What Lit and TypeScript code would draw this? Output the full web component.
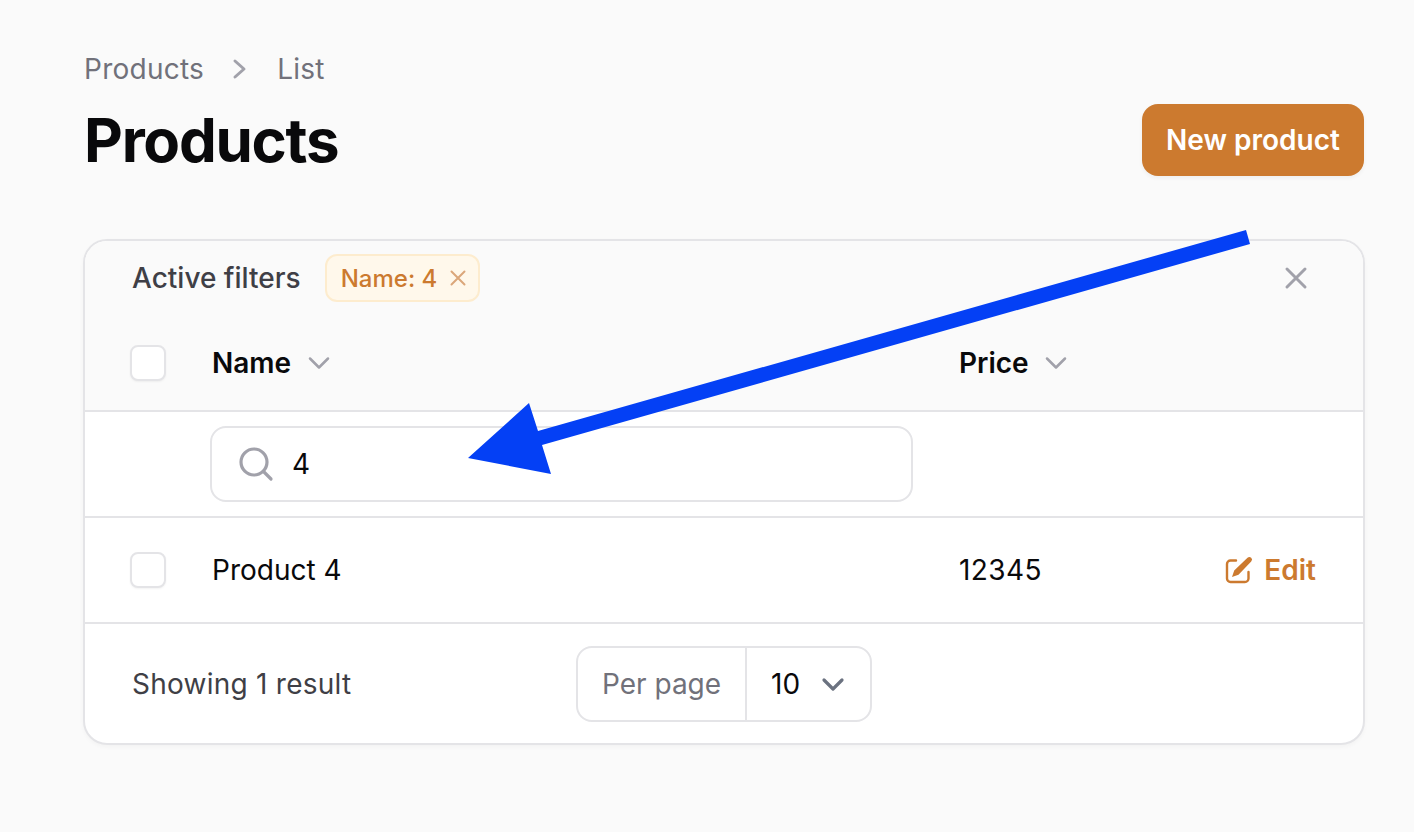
import { LitElement, html, css } from "lit";
import { customElement } from "lit/decorators.js";

const chevron = html`<svg class="chev" viewBox="0 0 24 24" fill="none" stroke="currentColor" stroke-width="2.5" stroke-linecap="round" stroke-linejoin="round"><path d="M3 7.5 12 16.5 21 7.5"/></svg>`;

@customElement("app-root")
export class AppRoot extends LitElement {
  static styles = css`
    :host { display: block; position: relative; width: 1414px; height: 832px; overflow: hidden; background: #fafafa; font-family: Inter, "Liberation Sans", sans-serif; color: #09090b; font-size: 28px; }
    * { box-sizing: border-box; }
    .page { padding: 48px 50px 0 84px; }
    .crumbs { display: flex; align-items: center; height: 41px; color: #71717a; font-weight: 400; letter-spacing: .25px; }
    .crumb-sep { width: 20px; height: 28px; margin: 0 26px 0 27px; color: #a1a1aa; }
    .head { display: flex; justify-content: space-between; align-items: center; height: 72px; margin-top: 15px; margin-bottom: 63px; }
    h1 { margin: 0; font-size: 60px; line-height: 72px; font-weight: 700; letter-spacing: -1.25px; color: #09090b; }
    .btn { display: flex; align-items: center; justify-content: center; width: 222px; height: 72px; border-radius: 16px; background: #cc7a2f; color: #fff; font-weight: 600; box-shadow: 0 2px 4px rgba(0,0,0,.05); }
    .card { width: 1282px; height: 506px; margin-left: -1px; background: #fff; border: 2px solid #e4e4e7; border-radius: 24px; overflow: hidden; box-shadow: 0 2px 4px rgba(0,0,0,.03); }
    .top { background: #fafafa; border-bottom: 2px solid #e4e4e7; height: 171px; }
    .filters { display: flex; align-items: center; height: 74px; padding: 0 47px; }
    .filters .label { color: #3f3f46; font-weight: 500; }
    .chip { display: flex; align-items: center; gap: 11px; height: 48px; margin-left: 24px; padding: 0 10px 0 14px; background: #fff8eb; border: 2px solid #fdecce; border-radius: 12px; color: #cc7a2f; font-size: 24px; font-weight: 500; }
    .chip svg { width: 20px; height: 20px; color: #dba77a; }
    .clear { width: 28px; height: 28px; margin-left: auto; margin-right: 6px; color: #a1a1aa; }
    .hrow { display: flex; align-items: center; height: 95px; }
    .box { width: 36px; height: 36px; flex: none; margin-left: 45px; background: #fff; border: 2px solid #e4e4e7; border-radius: 8px; box-shadow: 0 1px 2px rgba(0,0,0,.05); }
    .col-name { width: 747px; margin-left: 46px; display: flex; align-items: center; }
    .col-price { display: flex; align-items: center; }
    .row .col-price { letter-spacing: .4px; }
    .th { font-weight: 600; }
    .chev { width: 24px; height: 24px; margin-left: 16px; color: #a1a1aa; }
    .col-price .chev { margin-left: 15px; }
    .frow { display: flex; align-items: center; height: 106px; border-bottom: 2px solid #e4e4e7; padding-left: 125px; }
    .search { display: flex; align-items: center; width: 703px; height: 76px; background: #fff; border: 2px solid #e4e4e7; border-radius: 16px; padding-left: 26px; }
    .search svg { width: 36px; height: 36px; color: #a1a1aa; flex: none; }
    .search span { margin-left: 18px; }
    .row { display: flex; align-items: center; height: 106px; border-bottom: 2px solid #e4e4e7; }
    .edit { display: flex; align-items: center; gap: 10px; margin-left: auto; margin-right: 47px; color: #cc7a2f; font-weight: 600; font-size: 28px; }
    .edit svg { width: 30px; height: 30px; }
    .foot { display: flex; align-items: center; height: 119px; padding: 1px 0 0 47px; }
    .foot .txt { color: #3f3f46; width: 444px; font-weight: 400; letter-spacing: .25px; }
    .per { display: flex; align-items: center; width: 296px; height: 76px; background: #fff; border: 2px solid #e4e4e7; border-radius: 16px; }
    .per .l { width: 169px; height: 100%; display: flex; align-items: center; padding-left: 24px; color: #71717a; border-right: 2px solid #e4e4e7; }
    .per .v { margin-left: 24px; }
    .per svg { width: 24px; height: 24px; margin-left: 21px; color: #6b7280; }
    .arrow { position: absolute; left: 0; top: 0; width: 1414px; height: 832px; pointer-events: none; }
  `;

  render() {
    return html`
      <div class="page">
        <nav class="crumbs">
          <span>Products</span>
          <svg class="crumb-sep" viewBox="0 0 20 28" fill="none" stroke="currentColor" stroke-width="3" stroke-linecap="round" stroke-linejoin="round"><path d="M4 6 13 14 4 22"/></svg>
          <span>List</span>
        </nav>
        <div class="head">
          <h1>Products</h1>
          <div class="btn">New product</div>
        </div>
        <section class="card">
          <div class="top">
            <div class="filters">
              <span class="label">Active filters</span>
              <div class="chip">
                <span>Name: 4</span>
                <svg viewBox="0 0 20 20" fill="none" stroke="currentColor" stroke-width="2" stroke-linecap="round"><path d="M3.5 3.5 16.5 16.5M16.5 3.5 3.5 16.5"/></svg>
              </div>
              <svg class="clear" viewBox="0 0 28 28" fill="none" stroke="currentColor" stroke-width="3" stroke-linecap="round"><path d="M5 5 23 23M23 5 5 23"/></svg>
            </div>
            <div class="hrow">
              <div class="box"></div>
              <div class="col-name th">Name ${chevron}</div>
              <div class="col-price th">Price ${chevron}</div>
            </div>
          </div>
          <div class="frow">
            <div class="search">
              <svg viewBox="0 0 36 36" fill="none" stroke="currentColor" stroke-width="3.2" stroke-linecap="round"><circle cx="16" cy="16" r="13"/><path d="M25.5 25.5 33 33"/></svg>
              <span>4</span>
            </div>
          </div>
          <div class="row">
            <div class="box"></div>
            <div class="col-name">Product 4</div>
            <div class="col-price">12345</div>
            <div class="edit">
              <svg viewBox="0 0 30 30" fill="none"><path d="M12 5.5H6.5a3.5 3.5 0 0 0-3.5 3.5v14.5a3.5 3.5 0 0 0 3.5 3.5H21a3.5 3.5 0 0 0 3.5-3.5V17" stroke="currentColor" stroke-width="2.4" stroke-linecap="round"/><path d="M23.5 2.8a2.6 2.6 0 0 1 3.7 3.7L14.5 19.8 8 22l2.2-6.5z" fill="currentColor"/></svg>
              <span>Edit</span>
            </div>
          </div>
          <div class="foot">
            <span class="txt">Showing 1 result</span>
            <div class="per">
              <div class="l">Per page</div>
              <span class="v">10</span>
              <svg viewBox="0 0 24 24" fill="none" stroke="currentColor" stroke-width="3.2" stroke-linecap="round" stroke-linejoin="round"><path d="M3 8 12 17 21 8"/></svg>
            </div>
          </div>
        </section>
      </div>
      <svg class="arrow" viewBox="0 0 1414 832"><polygon fill="#0440f5" points="1246,230 1250,244 542,445 551,474 468,458 529,403 538,431"/></svg>
    `;
  }
}
